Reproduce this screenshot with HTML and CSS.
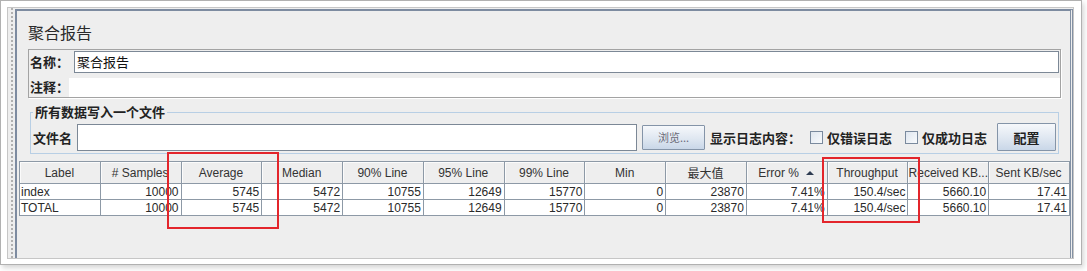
FILE: index.html
```html
<!DOCTYPE html>
<html lang="zh-CN">
<head>
    <meta charset="UTF-8">
    <title>聚合报告</title>
    <link rel="stylesheet" href="styles.css">
</head>
<body>

<div class="shot">
    <div class="frame">
        <div class="window">
            <div class="splitter"></div>
            <div class="panel">
                <div class="title">聚合报告</div>

                <div class="namebox">
                    <div class="name-row">
                        <span class="lbl name-lbl">名称：</span>
                        <div class="name-field">聚合报告</div>
                    </div>
                    <div class="comment-row">
                        <span class="lbl comment-lbl">注释：</span>
                        <div class="comment-field"></div>
                    </div>
                </div>

                <fieldset class="filegroup">
                    <legend>所有数据写入一个文件</legend>
                    <div class="file-row">
                        <span class="lbl file-lbl">文件名</span>
                        <div class="file-field"></div>
                        <button class="browse">浏览...</button>
                        <span class="lbl log-lbl">显示日志内容：</span>
                        <span class="check first"><i class="box"></i>仅错误日志</span>
                        <span class="check second"><i class="box"></i>仅成功日志</span>
                        <button class="config">配置</button>
                    </div>
                </fieldset>

                <table class="results">
                    <thead>
                        <tr>
                            <th>Label</th>
                            <th># Samples</th>
                            <th>Average</th>
                            <th>Median</th>
                            <th>90% Line</th>
                            <th>95% Line</th>
                            <th>99% Line</th>
                            <th>Min</th>
                            <th>最大值</th>
                            <th>Error % <span class="sort"></span></th>
                            <th>Throughput</th>
                            <th class="cut">Received KB...</th>
                            <th>Sent KB/sec</th>
                        </tr>
                    </thead>
                    <tbody>
                        <tr>
                            <td class="txt">index</td>
                            <td>10000</td>
                            <td>5745</td>
                            <td>5472</td>
                            <td>10755</td>
                            <td>12649</td>
                            <td>15770</td>
                            <td>0</td>
                            <td>23870</td>
                            <td>7.41%</td>
                            <td>150.4/sec</td>
                            <td>5660.10</td>
                            <td>17.41</td>
                        </tr>
                        <tr>
                            <td class="txt">TOTAL</td>
                            <td>10000</td>
                            <td>5745</td>
                            <td>5472</td>
                            <td>10755</td>
                            <td>12649</td>
                            <td>15770</td>
                            <td>0</td>
                            <td>23870</td>
                            <td>7.41%</td>
                            <td>150.4/sec</td>
                            <td>5660.10</td>
                            <td>17.41</td>
                        </tr>
                    </tbody>
                </table>
            </div>
        </div>
    </div>

    <!-- red annotation boxes drawn over the screenshot -->
    <div class="mark mark-avg"></div>
    <div class="mark mark-tp"></div>
</div>

</body>
</html>
```

FILE: styles.css
```css
* {
    box-sizing: border-box;
}

body {
    margin: 0;
    background: #fff;
    font-family: "Liberation Sans", Arial, sans-serif;
    color: #222;
}

.shot {
    position: relative;
    width: 1087px;
    height: 271px;
}

.frame {
    width: 1082px;
    height: 265px;
    border: 1px solid #b1b1b1;
    background: #fff;
    padding: 6px 7px 5px 6px;
    box-shadow: 2px 3px 5px rgba(0, 0, 0, 0.16);
}

.window {
    display: flex;
    height: 100%;
    border: 1px solid #c6c6c6;
    background: #eeeeee;
}

.splitter {
    width: 7px;
    flex: none;
    padding-left: 3px;
}

.splitter::before {
    content: "";
    display: block;
    height: 100%;
    border-left: 2px dotted #b0b0b0;
}

.panel {
    flex: 1;
    margin: 1px 1px 0 0;
    border-top: 2px solid #7d8ba0;
    border-left: 2px solid #7d8ba0;
    border-right: 3px double #8391a4;
}

.title {
    margin: 10px 0 0 11px;
    height: 22px;
    line-height: 22px;
    font-family: "Noto Sans CJK SC", sans-serif;
    font-size: 16px;
    color: #2a2a2a;
}

.lbl {
    font-family: "Noto Sans CJK SC", sans-serif;
    font-size: 13px;
    font-weight: bold;
    color: #222;
    white-space: nowrap;
    flex: none;
}

/* name / comment box */
.namebox {
    margin: 6px 0 0 11px;
    width: 1033px;
    height: 49px;
    border: 1px solid #a3a3a3;
    box-shadow: 1px 1px 0 #fff;
}

.name-row {
    display: flex;
    align-items: center;
    height: 23px;
    padding-left: 1px;
}

.name-lbl {
    width: 44px;
}

.name-field {
    width: 985px;
    height: 22px;
    margin-top: 1px;
    border: 1px solid #7c8896;
    background: #fff;
    padding-left: 2px;
    font-family: "Noto Sans CJK SC", sans-serif;
    font-size: 13px;
    line-height: 20px;
    color: #111;
}

.comment-row {
    display: flex;
    align-items: center;
    height: 24px;
    padding-left: 1px;
}

.comment-lbl {
    width: 39px;
    margin-top: 2px;
}

.comment-field {
    width: 991px;
    height: 19px;
    margin-top: 5px;
    background: #fff;
}

/* file group */
.filegroup {
    margin: 6px 0 0 13px;
    width: 1029px;
    padding: 3px 0 2px 2px;
    border: 1px solid #b8cfe5;
    min-width: 0;
}

.filegroup legend {
    padding: 0 2px;
    font-family: "Noto Sans CJK SC", sans-serif;
    font-size: 13px;
    font-weight: bold;
    line-height: 16px;
    color: #222;
}

.file-row {
    display: flex;
    align-items: center;
    height: 28px;
}

.file-lbl {
    width: 39px;
}

.file-field {
    width: 560px;
    height: 27px;
    margin-left: 5px;
    border: 1px solid #7c8896;
    background: #fff;
}

.browse,
.config {
    border: 1px solid #8494a8;
    border-radius: 1px;
    background: linear-gradient(#f6f8fb, #dfe7f1 55%, #c9d7e8);
    padding: 0;
    cursor: pointer;
}

.browse {
    width: 63px;
    height: 25px;
    margin-left: 5px;
    font-family: "Noto Sans CJK SC", sans-serif;
    font-size: 11px;
    color: #6a6a78;
}

.log-lbl {
    width: 91px;
    margin-left: 5px;
}

.check {
    display: flex;
    align-items: center;
    font-family: "Noto Sans CJK SC", sans-serif;
    font-size: 13px;
    font-weight: bold;
    color: #222;
    white-space: nowrap;
}

.check.first {
    margin-left: 9px;
}

.check.second {
    margin-left: 13px;
}

.box {
    width: 13px;
    height: 13px;
    margin-right: 4px;
    border: 1px solid #7a8a9e;
    background: linear-gradient(135deg, #dfe6ef, #f8fafc);
}

.config {
    width: 59px;
    height: 28px;
    margin-left: 10px;
    font-family: "Noto Sans CJK SC", sans-serif;
    font-size: 13px;
    font-weight: bold;
    color: #222;
}

/* results table */
.results {
    margin: 7px 0 0 2px;
    width: 1051px;
    table-layout: fixed;
    border-collapse: collapse;
    font-size: 12px;
}

.results th,
.results td {
    border: 1px solid #8d99a6;
    padding: 0 2px 0 1px;
    white-space: nowrap;
    overflow: hidden;
}

.results thead tr {
    height: 22px;
}

.results tbody tr {
    height: 16px;
}

.results th {
    background: #eeeeee;
    font-weight: normal;
    color: #333;
    text-align: center;
    font-family: "Liberation Sans", "Noto Sans CJK SC", sans-serif;
    box-shadow: inset 1px 1px 0 #fbfbfb;
}

.results th.cut {
    padding: 0;
}

.results td {
    background: #fff;
    color: #2a2a2a;
    text-align: right;
    line-height: 14px;
}

.results td.txt {
    text-align: left;
}

.sort {
    display: inline-block;
    margin-left: 4px;
    vertical-align: 2px;
    border-left: 4px solid transparent;
    border-right: 4px solid transparent;
    border-bottom: 4px solid #2f3d52;
}

/* annotation boxes */
.mark {
    position: absolute;
    border: 2px solid #e3252b;
}

.mark-avg {
    left: 167px;
    top: 152px;
    width: 112px;
    height: 77px;
}

.mark-tp {
    left: 822px;
    top: 157px;
    width: 98px;
    height: 66px;
}
```
